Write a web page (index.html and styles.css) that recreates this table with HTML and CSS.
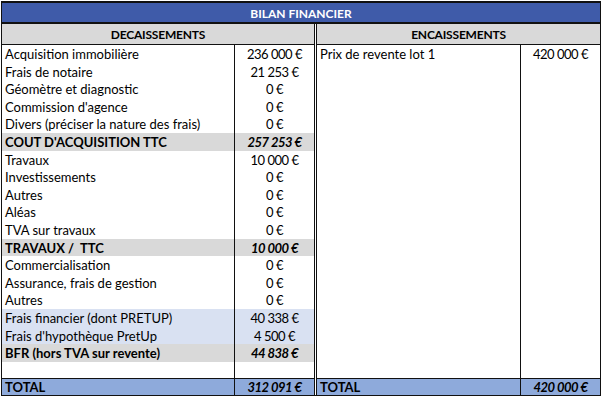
FILE: index.html
```html
<!DOCTYPE html>
<html lang="fr">
<head>
<meta charset="utf-8">
<title>Bilan financier</title>
<link rel="stylesheet" href="styles.css">
</head>
<body>
<div class="sheet">
  <div class="title">BILAN FINANCIER</div>
  <div class="cols">
    <div class="sec left">
      <div class="head">DECAISSEMENTS</div>
      <div class="body">
        <div class="row"><span class="l">Acquisition immobilière</span><span class="v">236 000 €</span></div>
        <div class="row"><span class="l">Frais de notaire</span><span class="v">21 253 €</span></div>
        <div class="row"><span class="l">Géomètre et diagnostic</span><span class="v">0 €</span></div>
        <div class="row"><span class="l">Commission d'agence</span><span class="v">0 €</span></div>
        <div class="row"><span class="l">Divers (préciser la nature des frais)</span><span class="v">0 €</span></div>
        <div class="row sub"><span class="l">COUT D'ACQUISITION TTC</span><span class="v">257 253 €</span></div>
        <div class="row"><span class="l">Travaux</span><span class="v">10 000 €</span></div>
        <div class="row"><span class="l">Investissements</span><span class="v">0 €</span></div>
        <div class="row"><span class="l">Autres</span><span class="v">0 €</span></div>
        <div class="row"><span class="l">Aléas</span><span class="v">0 €</span></div>
        <div class="row"><span class="l">TVA sur travaux</span><span class="v">0 €</span></div>
        <div class="row sub"><span class="l">TRAVAUX /  TTC</span><span class="v">10 000 €</span></div>
        <div class="row"><span class="l">Commercialisation</span><span class="v">0 €</span></div>
        <div class="row"><span class="l">Assurance, frais de gestion</span><span class="v">0 €</span></div>
        <div class="row"><span class="l">Autres</span><span class="v">0 €</span></div>
        <div class="row fin"><span class="l">Frais financier (dont PRETUP)</span><span class="v">40 338 €</span></div>
        <div class="row fin"><span class="l">Frais d'hypothèque PretUp</span><span class="v">4 500 €</span></div>
        <div class="row sub"><span class="l">BFR (hors TVA sur revente)</span><span class="v">44 838 €</span></div>
        <div class="row blank"><span class="l"></span><span class="v"></span></div>
      </div>
      <div class="row total"><span class="l">TOTAL</span><span class="v">312 091 €</span></div>
    </div>
    <div class="sec right">
      <div class="head">ENCAISSEMENTS</div>
      <div class="body">
        <div class="row"><span class="l">Prix de revente lot 1</span><span class="v">420 000 €</span></div>
        <div class="row fill"><span class="l"></span><span class="v"></span></div>
      </div>
      <div class="row total"><span class="l">TOTAL</span><span class="v">420 000 €</span></div>
    </div>
  </div>
</div>
</body>
</html>
```
FILE: styles.css
```css
* { box-sizing: border-box; }
html, body { margin: 0; padding: 0; background: #fff; }
body {
  font-family: Lato, "Open Sans", sans-serif;
  font-size: 13px;
  color: #000;
}
.sheet {
  margin: 1px 0 0 1px;
  width: 600px;
  border: 1px solid #111;
  border-top-width: 2px;
  display: flex;
  flex-direction: column;
}
.title {
  height: 21px;
  background: #3f5ba9;
  color: #fff;
  font-weight: bold;
  font-size: 12px;
  text-align: center;
  line-height: 21px;
  border-bottom: 2px solid #111;
}
.cols {
  display: flex;
  gap: 1px;
}
.sec {
  display: flex;
  flex-direction: column;
}
.sec.left {
  width: 313px;
  border-right: 1px solid #111;
}
.sec.right {
  flex: 1;
  border-left: 1px solid #111;
}
.head {
  height: 21px;
  background: #d9d9d9;
  border-bottom: 1px solid #111;
  font-weight: bold;
  font-size: 12px;
  letter-spacing: -0.2px;
  text-align: center;
  line-height: 22px;
}
.body {
  flex: 1;
  display: flex;
  flex-direction: column;
}
.row {
  display: grid;
  height: 17.6px;
  line-height: 15.6px;
  white-space: pre;
}
.left .row { grid-template-columns: 232px 1fr; }
.right .row { grid-template-columns: 203px 1fr; }
.row .l { padding: 2px 0 0 3px; overflow: hidden; }
.row .v {
  padding-top: 2px;
  border-left: 1px solid #111;
  text-align: center;
  letter-spacing: -0.5px;
}
.row.sub { background: #d9d9d9; font-weight: bold; }
.row.sub .v, .row.total .v { font-style: italic; }
.row.fin { background: #d9e1f2; }
.row.blank { height: 16.2px; }
.row.fill { flex: 1; height: auto; }
.row.total {
  height: 17px;
  line-height: 15px;
  border-top: 1px solid #111;
  background: #8eaadb;
  font-weight: bold;
}
.row.total .l, .row.total .v { padding-top: 1px; }
```
